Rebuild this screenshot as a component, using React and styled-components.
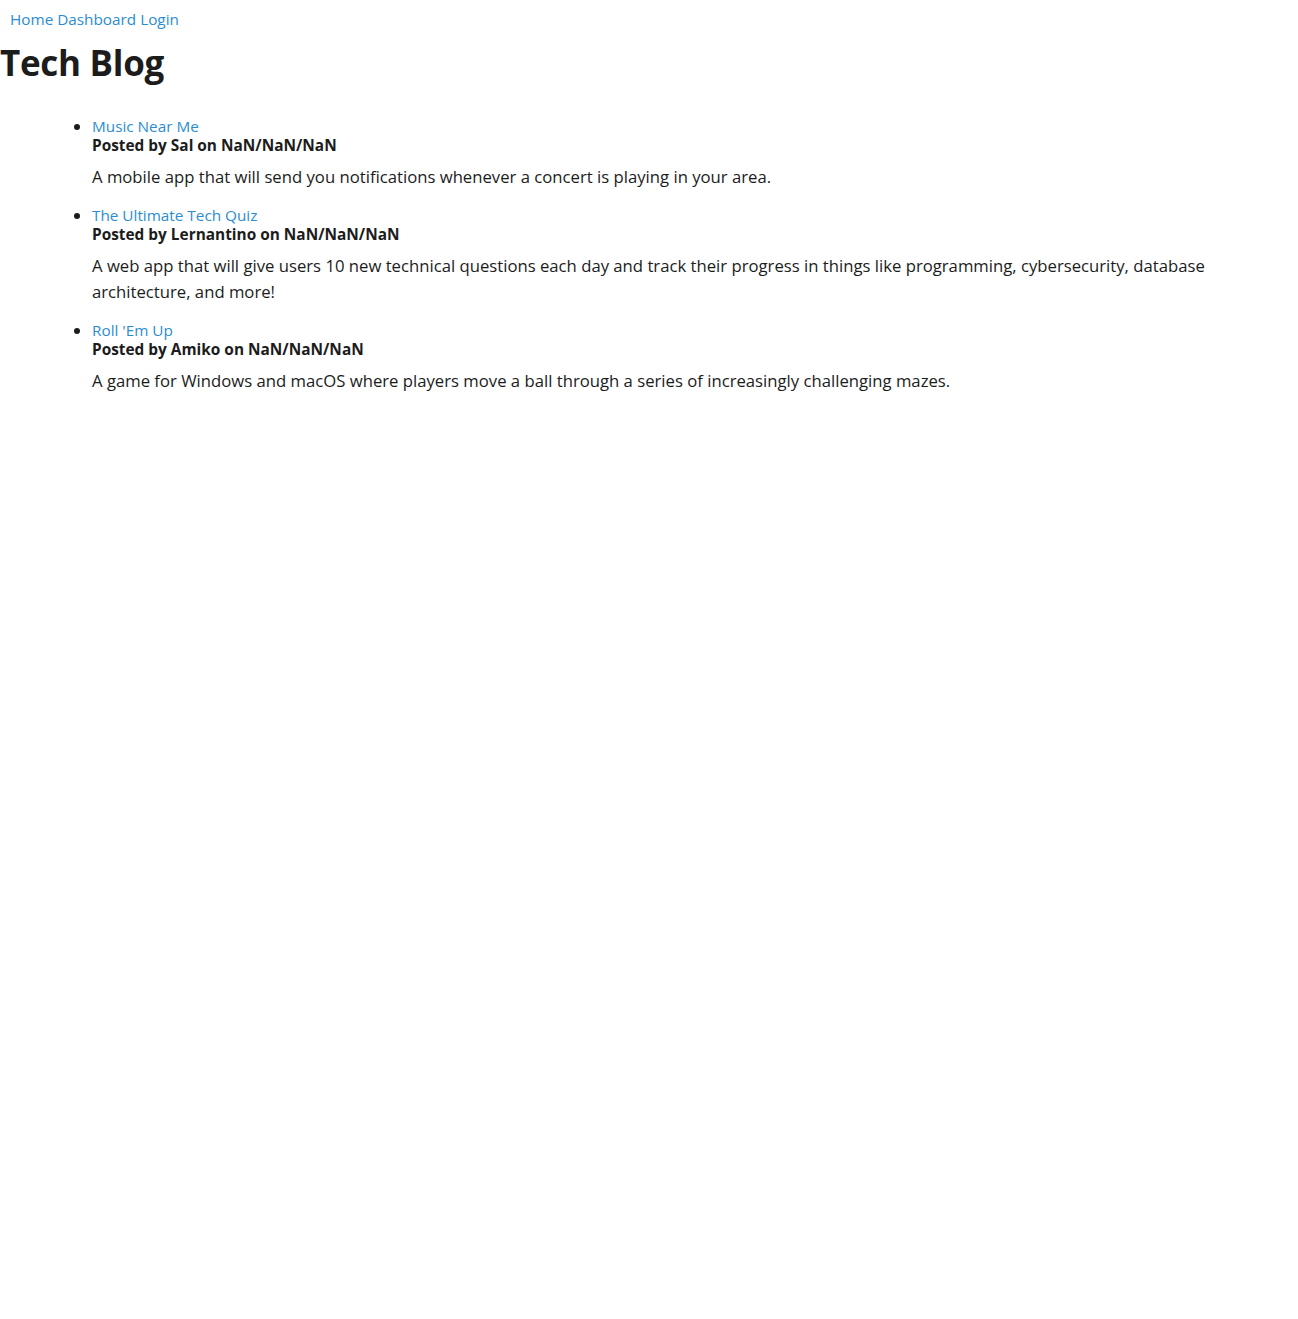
import React from 'react';
import styled, { createGlobalStyle } from 'styled-components';

const GlobalStyle = createGlobalStyle`
  body {
    margin: 0;
    background: #fff;
    color: #1c1c1c;
    font-family: 'Open Sans', 'Noto Sans', sans-serif;
  }
`;

const Nav = styled.nav`
  padding: 8px 10px 0;
  font-size: 15.3px;
  line-height: 22px;
  display: flex;
  gap: 4px;
`;

const NavLink = styled.a`
  color: #2b8dcf;
  text-decoration: none;
`;

const Title = styled.h1`
  margin: 0;
  padding: 11px 0 0;
  font-size: 35px;
  line-height: 44px;
  font-weight: 700;
  letter-spacing: -0.3px;
`;

const PostList = styled.ul`
  margin: 31px 0 0;
  padding-left: 92px;
  font-size: 16px;
`;

const PostItem = styled.li`
  margin-bottom: 15px;
  line-height: 20px;
`;

const PostTitle = styled.a`
  color: #2b8dcf;
  text-decoration: none;
  font-size: 15.3px;
  display: block;
`;

const Meta = styled.div`
  font-weight: 700;
  font-size: 15.4px;
`;

const Body = styled.p`
  margin: 8px 0 0;
  font-size: 16.7px;
  line-height: 26px;
  max-width: 1130px;
`;

const posts = [
  {
    title: 'Music Near Me',
    author: 'Sal',
    body: 'A mobile app that will send you notifications whenever a concert is playing in your area.',
  },
  {
    title: 'The Ultimate Tech Quiz',
    author: 'Lernantino',
    body: 'A web app that will give users 10 new technical questions each day and track their progress in things like programming, cybersecurity, database architecture, and more!',
  },
  {
    title: "Roll 'Em Up",
    author: 'Amiko',
    body: 'A game for Windows and macOS where players move a ball through a series of increasingly challenging mazes.',
  },
];

export default function App() {
  return (
    <>
      <GlobalStyle />
      <Nav>
        <NavLink href="#">Home</NavLink>
        <NavLink href="#">Dashboard</NavLink>
        <NavLink href="#">Login</NavLink>
      </Nav>
      <Title>Tech Blog</Title>
      <PostList>
        {posts.map((p) => (
          <PostItem key={p.title}>
            <PostTitle href="#">{p.title}</PostTitle>
            <Meta>Posted by {p.author} on NaN/NaN/NaN</Meta>
            <Body>{p.body}</Body>
          </PostItem>
        ))}
      </PostList>
    </>
  );
}
